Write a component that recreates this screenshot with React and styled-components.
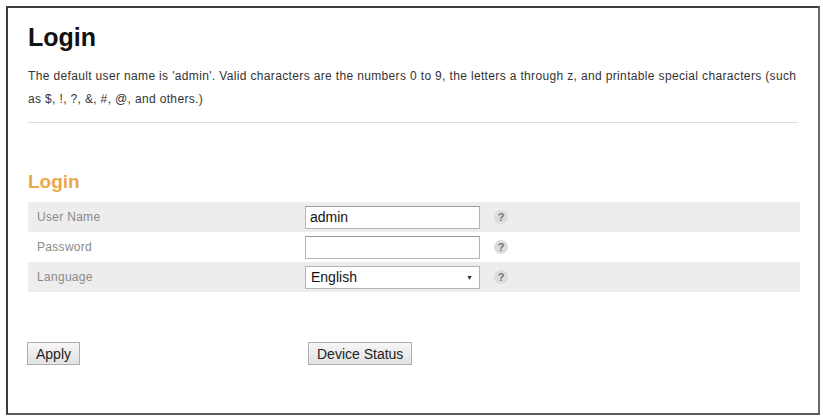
import React from 'react'
import styled, { createGlobalStyle } from 'styled-components'

const GlobalStyle = createGlobalStyle`
  html, body {
    margin: 0;
    padding: 0;
    background: #ffffff;
  }
  body {
    font-family: "Liberation Sans", Arial, sans-serif;
  }
`

const rows = [
  { label: 'User Name', type: 'text', value: 'admin', shaded: true },
  { label: 'Password', type: 'password', value: '', shaded: false },
  { label: 'Language', type: 'select', value: 'English', shaded: true },
]

function App() {
  return (
    <>
      <GlobalStyle />
      <StFrame>
        <StTitle>Login</StTitle>
        <StDesc>
          The default user name is 'admin'. Valid characters are the numbers 0 to 9, the letters a through z, and printable special characters (such as $, !, ?, &amp;, #, @, and others.)
        </StDesc>
        <StRule />

        <StSection>Login</StSection>
        <StTable>
          {rows.map((row) => (
            <StRow key={row.label} shaded={row.shaded}>
              <StLabel>{row.label}</StLabel>
              <StField>
                {row.type === 'select' ? (
                  <StSelect>
                    <span>{row.value}</span>
                    <StArrow>▼</StArrow>
                  </StSelect>
                ) : (
                  <StInput type={row.type} defaultValue={row.value} />
                )}
              </StField>
              <StHelp>?</StHelp>
            </StRow>
          ))}
        </StTable>

        <StButtons>
          <StButton>Apply</StButton>
          <StButton>Device Status</StButton>
        </StButtons>
      </StFrame>
    </>
  )
}

export default App

const StFrame = styled.div`
  box-sizing: border-box;
  margin: 6px 0 0 6px;
  width: 814px;
  height: 409px;
  border: 2px solid #3c3c3c;
  border-right-color: #6a6a6a;
  border-bottom-color: #5a5a5a;
  padding: 15px 18px 0 20px;
`

const StTitle = styled.h1`
  margin: 0;
  font-size: 25px;
  line-height: 28px;
  font-weight: bold;
  color: #111;
`

const StDesc = styled.p`
  margin: 14px 0 0;
  font-size: 12px;
  letter-spacing: 0.35px;
  line-height: 23px;
  color: #333;
  width: 775px;
`

const StRule = styled.div`
  height: 1px;
  background: #dcdcdc;
  margin: 11px 2px 0 0;
`

const StSection = styled.h2`
  margin: 48px 0 0;
  font-size: 19px;
  line-height: 22px;
  font-weight: bold;
  color: #e9a94a;
`

const StTable = styled.div`
  margin-top: 9px;
  display: flex;
  flex-direction: column;
`

const StRow = styled.div`
  display: grid;
  grid-template-columns: 277px 186px 1fr;
  align-items: center;
  height: 30px;
  background: ${(p) => (p.shaded ? '#ededed' : '#ffffff')};
`

const StLabel = styled.div`
  padding-left: 9px;
  font-size: 12px;
  letter-spacing: 0.3px;
  color: #8a8a8a;
`

const StField = styled.div`
  display: flex;
  align-items: center;
`

const StInput = styled.input`
  box-sizing: border-box;
  width: 175px;
  height: 23px;
  border: 1px solid #b4b4b4;
  border-top-color: #999;
  background: #fff;
  padding: 0 4px;
  font-family: "Liberation Sans", Arial, sans-serif;
  font-size: 14px;
  color: #111;
  outline: none;
`

const StSelect = styled.div`
  box-sizing: border-box;
  width: 175px;
  height: 23px;
  border: 1px solid #b4b4b4;
  background: #fff;
  padding: 0 6px 0 5px;
  display: flex;
  align-items: center;
  justify-content: space-between;
  font-size: 14px;
  color: #111;
`

const StArrow = styled.span`
  font-size: 7px;
  color: #333;
`

const StHelp = styled.span`
  width: 14px;
  height: 14px;
  border-radius: 50%;
  background: #dcdcdc;
  color: #777;
  font-size: 11px;
  font-weight: bold;
  line-height: 14px;
  text-align: center;
  margin-left: 3px;
`

const StButtons = styled.div`
  display: grid;
  grid-template-columns: 281px auto;
  justify-items: start;
  margin-top: 50px;
  margin-left: -1px;
`

const StButton = styled.button`
  height: 23px;
  padding: 0 8px;
  border: 1px solid #adadad;
  border-radius: 0;
  background: linear-gradient(#f6f6f6, #e2e2e2);
  font-family: "Liberation Sans", Arial, sans-serif;
  font-size: 14px;
  color: #222;
  cursor: pointer;
`
